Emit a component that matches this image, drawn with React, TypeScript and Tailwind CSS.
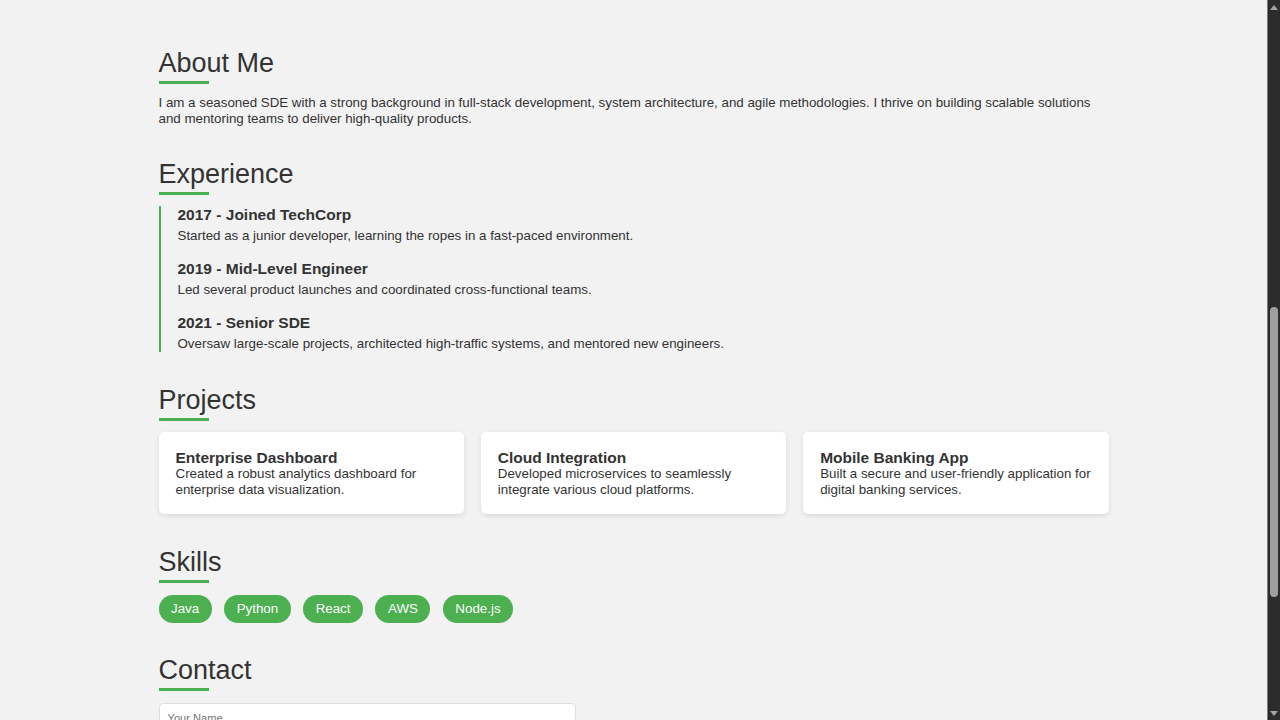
import React from 'react';

const experience = [
  { title: '2017 - Joined TechCorp', text: 'Started as a junior developer, learning the ropes in a fast-paced environment.' },
  { title: '2019 - Mid-Level Engineer', text: 'Led several product launches and coordinated cross-functional teams.' },
  { title: '2021 - Senior SDE', text: 'Oversaw large-scale projects, architected high-traffic systems, and mentored new engineers.' },
];

const projects = [
  { title: 'Enterprise Dashboard', text: 'Created a robust analytics dashboard for enterprise data visualization.' },
  { title: 'Cloud Integration', text: 'Developed microservices to seamlessly integrate various cloud platforms.' },
  { title: 'Mobile Banking App', text: 'Built a secure and user-friendly application for digital banking services.' },
];

const skills = ['Java', 'Python', 'React', 'AWS', 'Node.js'];

function SectionTitle({ children }: { children: React.ReactNode }) {
  return (
    <div>
      <h2 className="text-[27px] leading-[30px] font-normal text-[#333]">{children}</h2>
      <div className="mt-[3px] h-[3px] w-[50px] bg-[#4caf50]" />
    </div>
  );
}

// dark browser scrollbar, as seen on the right edge
function Scrollbar() {
  return (
    <div className="w-[13px] h-screen shrink-0 bg-[#2c2c2c] border-l border-[#7d7d7d] flex flex-col items-center">
      <div className="h-[14px] flex items-center justify-center">
        <div className="w-0 h-0 border-x-[4px] border-x-transparent border-b-[5px] border-b-[#a3a3a3]" />
      </div>
      <div className="flex-1 w-full flex flex-col items-center pt-[293px]">
        <div className="w-[8px] h-[290px] rounded-[4px] bg-[#9f9f9f]" />
      </div>
      <div className="h-[14px] flex items-center justify-center">
        <div className="w-0 h-0 border-x-[4px] border-x-transparent border-t-[5px] border-t-[#a3a3a3]" />
      </div>
    </div>
  );
}

export default function App() {
  return (
    <div className="flex h-screen bg-[#f2f2f2]">
      <div className="flex-1 h-screen overflow-y-auto font-['Liberation_Sans',Arial,sans-serif] text-[#333] text-[13.33px] leading-[1.15] pt-[48px]">
        <div className="mx-auto w-[950px] pb-[60px]">

          {/* About */}
          <section>
            <SectionTitle>About Me</SectionTitle>
            <p className="mt-[11px] leading-[16px]">
              I am a seasoned SDE with a strong background in full-stack development, system architecture, and agile methodologies. I thrive on building scalable solutions and mentoring teams to deliver high-quality products.
            </p>
          </section>

          {/* Experience timeline */}
          <section className="mt-[32px]">
            <SectionTitle>Experience</SectionTitle>
            <div className="mt-[11px] border-l-2 border-[#4caf50] pl-[17px] flex flex-col gap-4">
              {experience.map((e) => (
                <div key={e.title}>
                  <h3 className="text-[15.5px] leading-[18px] font-bold">{e.title}</h3>
                  <p className="mt-[4px] leading-[16px]">{e.text}</p>
                </div>
              ))}
            </div>
          </section>

          {/* Projects */}
          <section className="mt-[33px]">
            <SectionTitle>Projects</SectionTitle>
            <div className="mt-[11px] grid grid-cols-3 gap-[17px]">
              {projects.map((p) => (
                <div key={p.title} className="bg-white rounded-[5px] p-[17px] shadow-[0_2px_5px_rgba(0,0,0,0.1)]">
                  <h3 className="text-[15.5px] leading-[17px] font-bold">{p.title}</h3>
                  <p className="leading-[15.5px]">{p.text}</p>
                </div>
              ))}
            </div>
          </section>

          {/* Skills */}
          <section className="mt-[33px]">
            <SectionTitle>Skills</SectionTitle>
            <div className="mt-[12px] flex flex-wrap gap-[12.5px]">
              {skills.map((s) => (
                <span key={s} className="bg-[#4caf50] text-white rounded-full px-[12.5px] py-[6px] leading-[16px]">
                  {s}
                </span>
              ))}
            </div>
          </section>

          {/* Contact */}
          <section className="mt-[32px]">
            <SectionTitle>Contact</SectionTitle>
            <form className="mt-[12px] w-[417px] flex flex-col gap-[8px] text-[11.1px]">
              <input
                type="text"
                placeholder="Your Name"
                className="bg-white border border-[#ddd] rounded-[4px] px-[8px] py-[8px] placeholder:text-[#757575] outline-none"
              />
              <input
                type="email"
                placeholder="Your Email"
                className="bg-white border border-[#ddd] rounded-[4px] px-[8px] py-[8px] placeholder:text-[#757575] outline-none"
              />
              <textarea
                rows={5}
                placeholder="Your Message"
                className="bg-white border border-[#ddd] rounded-[4px] px-[8px] py-[8px] placeholder:text-[#757575] outline-none resize-none"
              />
              <button type="button" className="self-start bg-[#4caf50] text-white rounded-[4px] px-[12px] py-[8px]">
                Send Message
              </button>
            </form>
          </section>

        </div>
      </div>
      <Scrollbar />
    </div>
  );
}
